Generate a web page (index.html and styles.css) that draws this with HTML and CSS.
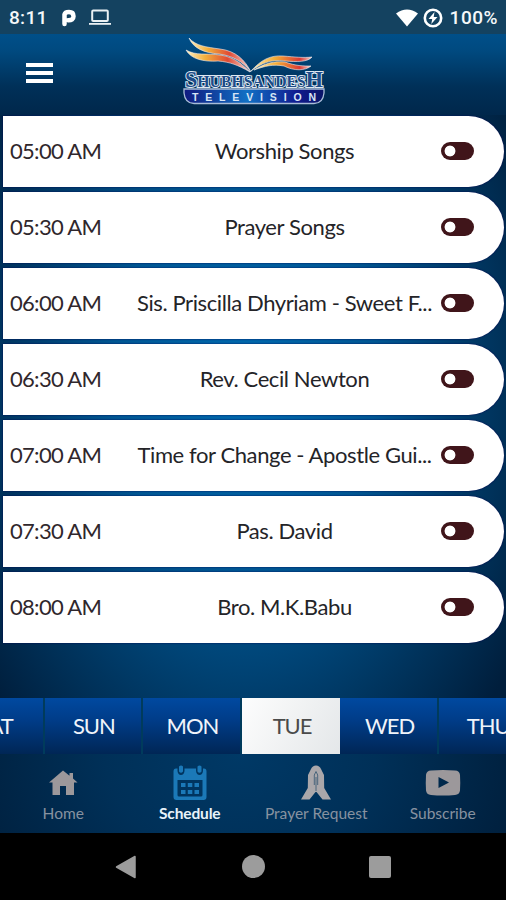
FILE: index.html
```html
<!DOCTYPE html>
<html lang="en">
<head>
  <meta charset="UTF-8" />
  <meta name="viewport" content="width=device-width, initial-scale=1.0" />
  <title>Shubhsandesh Television - Schedule</title>
  <link rel="stylesheet" href="styles.css">
</head>
<body>
  <div class="app">
    <div class="status-bar">
      <span class="clock">8:11</span>
      <svg class="icon-p" width="16" height="18" viewBox="0 0 16 18"><path d="M3.500 15V5.500Q4 3 8 3Q12.500 3 12.500 7.200Q12.500 11.500 7 11.200" fill="none" stroke="#fff" stroke-width="4.500" stroke-linecap="round" stroke-linejoin="round"/></svg>
      <svg class="icon-laptop" width="22" height="17" viewBox="0 0 22 17"><rect x="3.200" y="1.500" width="15.600" height="10.500" rx="1" fill="none" stroke="#e9f0f4" stroke-width="2"/><path d="M0 14h22v1.800H0z" fill="#e9f0f4"/></svg>
      <div class="status-right">
        <svg width="22" height="18" viewBox="0 0 22 18"><path d="M0 4.500Q11-3.500 22 4.500L11 17.500z" fill="#fff"/></svg>
        <svg width="20" height="20" viewBox="0 0 20 20"><circle cx="10" cy="10" r="8.200" fill="none" stroke="#fff" stroke-width="2.600"/><path d="M11.500 4L5.500 11h3.700L8.300 16L14.500 9h-3.800z" fill="#fff"/></svg>
        <span class="battery">100%</span>
      </div>
    </div>

    <header class="header">
      <button class="menu-btn" aria-label="Menu"><span></span><span></span><span></span></button>
      <svg class="logo" width="144" height="70" viewBox="0 0 144 70">
        <defs>
          <linearGradient id="wingLeft">
            <stop offset="0" stop-color="#fff3c8"/>
            <stop offset=".3" stop-color="#f2b03c"/>
            <stop offset=".65" stop-color="#e04a34"/>
            <stop offset="1" stop-color="#f6d9d6"/>
          </linearGradient>
          <linearGradient id="wingRight">
            <stop offset="0" stop-color="#fff0b8"/>
            <stop offset=".4" stop-color="#f3ab35"/>
            <stop offset=".8" stop-color="#d93a35"/>
            <stop offset="1" stop-color="#f3d3d0"/>
          </linearGradient>
          <linearGradient id="plate">
            <stop offset="0" stop-color="#101a80"/>
            <stop offset=".45" stop-color="#1270c4"/>
            <stop offset=".8" stop-color="#101c90"/>
            <stop offset="1" stop-color="#0a1466"/>
          </linearGradient>
        </defs>
        <g stroke="#f4eef0" stroke-width=".6" stroke-linejoin="round">
          <path d="M7 2C14 10 24 11 38 13C54 15 63 24 69 36C60 25 51 20 37 18C22 17 11 12 7 2z" fill="url(#wingLeft)"/>
          <path d="M4 14C14 20 25 17 38 19C53 21 61 29 68 36C56 29 48 26 36 25C21 26 9 23 4 14z" fill="url(#wingLeft)"/>
          <path d="M69 35C79 24 88 19 101 20C113 21 121 22 130 21C126 26 115 26 103 25C88 23 79 28 69 35z" fill="url(#wingRight)"/>
          <path d="M72 34C83 27 92 25 103 26C114 30 121 30 129 30C123 35 112 35 102 30C91 28 83 30 72 34z" fill="url(#wingRight)"/>
        </g>
        <path d="M2 53H142V57Q141 67.500 132 67.500H12Q3 67.500 2 57z" fill="url(#plate)" stroke="#a9bdd8" stroke-width="1.300"/>
        <text class="logo-name" x="3" y="51" textLength="138" lengthAdjust="spacingAndGlyphs">ShubhsandesH</text>
        <text class="logo-sub" x="10" y="64.500" textLength="124">TELEVISION</text>
      </svg>
    </header>

    <main class="schedule" id="schedule"></main>

    <div class="days">
      <button class="day">SAT</button>
      <button class="day">SUN</button>
      <button class="day">MON</button>
      <button class="day active">TUE</button>
      <button class="day">WED</button>
      <button class="day">THU</button>
    </div>

    <nav class="tabs">
      <a class="tab">
        <svg width="36" height="36" viewBox="0 0 36 36"><path d="M18 5.500L4 17.500H7.500V30H15V21H21V30H29V17.500H32.500L28 13.500V8H24.500V10.800z" fill="#9c989b"/></svg>
        <span>Home</span>
      </a>
      <a class="tab active">
        <svg width="36" height="36" viewBox="0 0 36 36">
          <path fill-rule="evenodd" d="M4 3.500H5.500V6Q6 10 9 10Q12 10 12.500 6V3.500H24V6Q24.500 10 27.500 10Q30.500 10 31 6V3.500H32Q34.500 3.500 34.500 6.500V32Q34.500 35 31.500 35H4.500Q1.500 35 1.500 32V6.500Q1.500 3.500 4 3.500zM5.500 15V30Q5.500 31.500 7 31.500H29Q30.500 31.500 30.500 30V15z" fill="#1b79b8"/>
          <path d="M7 1.500Q9-.5 11 1.500V6.500Q9 9 7 6.500zM25.500 1.500Q27.500-.5 29.500 1.500V6.500Q27.500 9 25.500 6.500z" fill="#1b79b8"/>
          <path d="M9 18h4.500v4H9zM15.800 18h4.500v4h-4.500zM22.500 18H27v4h-4.500zM9 25h4.500v4H9zM15.800 25h4.500v4h-4.500zM22.500 25H27v4h-4.500z" fill="#1b79b8"/>
        </svg>
        <span>Schedule</span>
      </a>
      <a class="tab">
        <svg width="36" height="36" viewBox="0 0 36 36">
          <path d="M18 .5Q14.500 .5 13 4L10 10L9.800 23L3 34.500H11.500L17.500 27H18.500L24.500 34.500H33L26.200 23L26 10L23 4Q21.500 .5 18 .5z" fill="#aaa7aa"/>
          <path d="M18 6.500L16.300 10V20M18 6.500L19.700 10V20M18 12V26" fill="none" stroke="#4a667c" stroke-width="1"/>
        </svg>
        <span>Prayer Request</span>
      </a>
      <a class="tab">
        <svg width="36" height="36" viewBox="0 0 36 36"><path fill-rule="evenodd" d="M6 5.500Q18 4.500 30 5.500Q34.500 5.500 35 10Q35.500 18 35 25.500Q34.500 29.500 30 30Q18 31 6 30Q1.500 29.500 1 25.500Q.5 18 1 10Q1.500 5.500 6 5.500zM13.500 12V23L24 17.500z" fill="#9c989b"/></svg>
        <span>Subscribe</span>
      </a>
    </nav>

    <div class="system-nav">
      <svg width="22" height="26" viewBox="0 0 22 26"><path d="M1.500 13L20 2.500V23.500z" fill="#9c9c9c" stroke="#9c9c9c" stroke-width="1.500" stroke-linejoin="round"/></svg>
      <span class="sys-home"></span>
      <span class="sys-recent"></span>
    </div>
  </div>

  <script>
    const programs = [
      { time: '05:00 AM', name: 'Worship Songs' },
      { time: '05:30 AM', name: 'Prayer Songs' },
      { time: '06:00 AM', name: 'Sis. Priscilla Dhyriam - Sweet F...' },
      { time: '06:30 AM', name: 'Rev. Cecil Newton' },
      { time: '07:00 AM', name: 'Time for Change - Apostle Gui...' },
      { time: '07:30 AM', name: 'Pas. David' },
      { time: '08:00 AM', name: 'Bro. M.K.Babu' }
    ];

    document.getElementById('schedule').innerHTML = programs.map(p => `
      <div class="program">
        <span class="time">${p.time}</span>
        <span class="name">${p.name}</span>
        <span class="toggle"></span>
      </div>
    `).join('');
  </script>
</body>
</html>
```
FILE: styles.css
```css
:root {
  --toggle-color: #40151a;
  --tab-grey: #8792a0;
}
* {
  box-sizing: border-box;
}
body {
  margin: 0;
  font-family: Lato, sans-serif;
  background: #000;
}
button {
  border: none;
  padding: 0;
  background: none;
  font-family: inherit;
}
.app {
  display: flex;
  flex-direction: column;
  width: 506px;
  height: 900px;
  overflow: hidden;
  background: radial-gradient(ellipse 330px 480px at 245px 380px, #006bb0 0%, #005793 40%, #00355f 75%, #001e3c 100%);
}
.status-bar {
  display: flex;
  align-items: center;
  flex: none;
  height: 34px;
  padding: 1px 8px 0 9px;
  background: #144260;
  color: #f5f8fa;
  font-family: Roboto, sans-serif;
  font-weight: 500;
  font-size: 19px;
}
.clock {
  width: 52px;
  letter-spacing: 0.3px;
}
.icon-laptop {
  margin-left: 12px;
}
.status-right {
  display: flex;
  align-items: center;
  gap: 5px;
  margin-left: auto;
}
.battery {
  margin-left: 2px;
  letter-spacing: 0.5px;
}
.header {
  display: flex;
  align-items: center;
  flex: none;
  height: 81px;
  padding-left: 26px;
  background: linear-gradient(#004f89 0%, #004a80 20%, #003058 65%, #00274b 100%);
}
.menu-btn {
  display: flex;
  flex-direction: column;
  gap: 4px;
  width: 27px;
  margin-top: -3px;
}
.menu-btn span {
  height: 4px;
  background: #fff;
}
.logo {
  margin: -8px 0 0 129px;
}
.logo-name {
  font-family: "Liberation Serif", serif;
  font-weight: bold;
  font-size: 24px;
  font-variant: small-caps;
  fill: #1d4c88;
  stroke: #dfe9f2;
  stroke-width: 2px;
  paint-order: stroke;
}
.logo-sub {
  font-family: "Liberation Sans", sans-serif;
  font-weight: bold;
  font-size: 10.5px;
  fill: #d7e5f5;
}
.schedule {
  display: flex;
  flex-direction: column;
  gap: 5px;
  flex: 1;
  padding: 0.5px 2px 0 3px;
}
.program {
  display: flex;
  align-items: center;
  height: 71px;
  padding: 0 30px 1px 7px;
  background: #fff;
  border-radius: 0 36px 36px 0;
  box-shadow: 0 0 2px #000050;
  font-size: 22px;
}
.time {
  width: 118px;
  color: #30272c;
  letter-spacing: -0.7px;
}
.name {
  flex: 1;
  text-align: center;
  white-space: nowrap;
  color: #242428;
  letter-spacing: -0.4px;
}
.toggle {
  width: 33px;
  height: 18px;
  border-radius: 9px;
  background: radial-gradient(circle at 9px 9px, #fff 5px, transparent 5.8px), var(--toggle-color);
}
.days {
  display: flex;
  flex: none;
  height: 56px;
  margin-left: -54px;
}
.day {
  flex: none;
  width: 98.6px;
  padding: 0 0 1px 2px;
  border-right: 2px solid #003b5c;
  background: linear-gradient(#0049a0 0%, #003c88 40%, #002655 100%);
  color: #f0f4fa;
  font-size: 22px;
  letter-spacing: -1px;
}
.day.active {
  border-right: none;
  background: linear-gradient(120deg, #fdfdfd, #e4e7e9);
  color: #4a4a4a;
}
.tabs {
  display: flex;
  flex: none;
  height: 79px;
  padding-top: 11px;
  background: radial-gradient(ellipse 300px 240px at 240px 0, #003966 0%, #003058 45%, #001e3b 100%);
}
.tab {
  display: flex;
  flex-direction: column;
  align-items: center;
  flex: 1;
  gap: 3px;
  color: var(--tab-grey);
  font-size: 15.5px;
  white-space: nowrap;
}
.tab.active {
  color: #e8f3fa;
  font-weight: bold;
}
.tab.active span {
  letter-spacing: -0.15px;
}
.system-nav {
  display: flex;
  align-items: center;
  justify-content: space-between;
  flex: none;
  height: 67px;
  padding: 0 115px;
  background: #000;
}
.sys-home {
  width: 23px;
  height: 23px;
  border-radius: 50%;
  background: #9c9c9c;
}
.sys-recent {
  width: 22px;
  height: 22px;
  border-radius: 2px;
  background: #9c9c9c;
}
```
